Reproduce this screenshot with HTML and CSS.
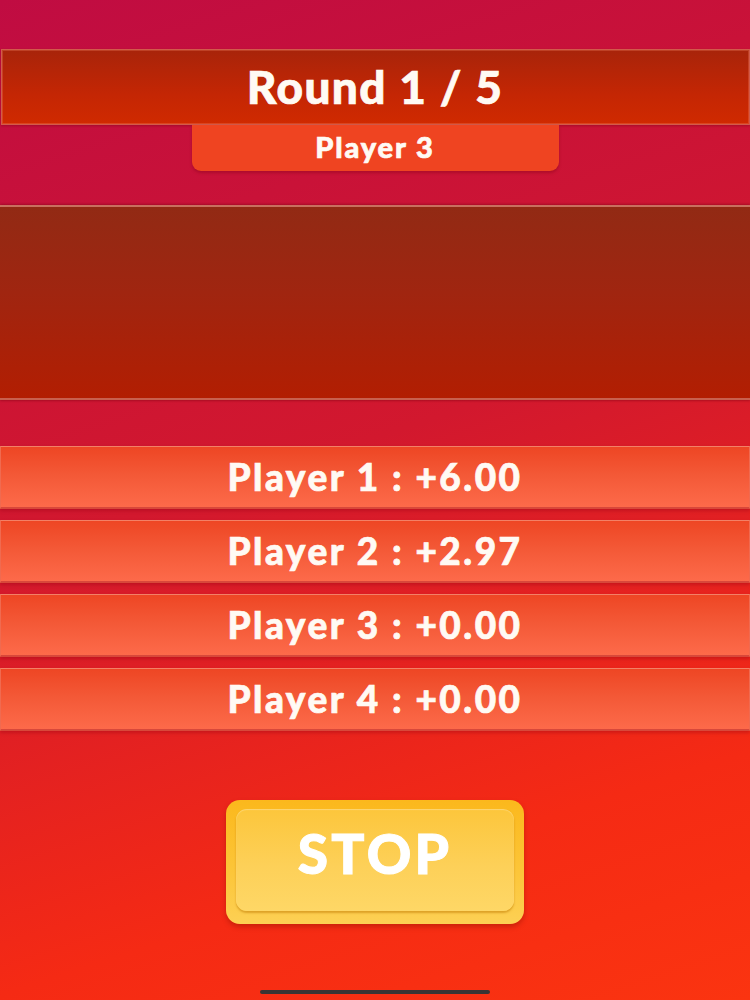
FILE: index.html
```html
<!DOCTYPE html>
<html>
<head>
<meta charset="utf-8">
<link rel="stylesheet" href="styles.css">
</head>
<body>
<div class="screen">
  <div class="title-bar">Round 1 / 5</div>
  <div class="tab">Player 3</div>
  <div class="panel"></div>
  <div class="scores">
    <div class="row">Player 1 : +6.00</div>
    <div class="row">Player 2 : +2.97</div>
    <div class="row">Player 3 : +0.00</div>
    <div class="row">Player 4 : +0.00</div>
  </div>
  <div class="stop"><div class="stop-inner">STOP</div></div>
  <div class="home-indicator"></div>
</div>
</body>
</html>
```

FILE: styles.css
```css
html, body {
  margin: 0;
  padding: 0;
}
.screen {
  width: 750px;
  height: 1000px;
  overflow: hidden;
  display: flex;
  flex-direction: column;
  align-items: center;
  background: linear-gradient(162deg, #c00c42 0%, #d2182e 45%, #f52a14 80%, #fb3410 100%);
  font-family: Lato, "Open Sans", sans-serif;
  font-weight: 900;
  color: #fffaf4;
  -webkit-text-stroke: 0.7px #fffaf4;
}
.title-bar {
  box-sizing: border-box;
  margin-top: 49px;
  width: 749px;
  height: 76px;
  display: flex;
  align-items: center;
  justify-content: center;
  font-size: 46px;
  letter-spacing: 1.4px;
  background: linear-gradient(180deg, #a8240a 0%, #c42604 60%, #d02a00 100%);
  border: 1px solid #d25a4a;
  box-shadow: inset 0 0 0 1px rgba(255, 150, 120, 0.25), 0 1px 2px rgba(120, 0, 20, 0.4);
  padding-bottom: 2px;
}
.tab {
  box-sizing: border-box;
  width: 367px;
  height: 46px;
  background: #ef4421;
  border-radius: 0 0 9px 9px;
  box-shadow: 0 2px 3px rgba(120, 0, 20, 0.35);
  display: flex;
  align-items: center;
  justify-content: center;
  font-size: 29px;
  letter-spacing: 1.9px;
  padding-bottom: 3px;
}
.panel {
  box-sizing: border-box;
  margin-top: 34px;
  width: 750px;
  height: 195px;
  background: linear-gradient(180deg, #922a14 0%, #a02510 45%, #b21e02 100%);
  border-top: 2px solid #c8705e;
  border-bottom: 2px solid #c8604e;
  box-shadow: 0 -1px 2px rgba(120, 0, 20, 0.4), 0 1px 2px rgba(120, 0, 20, 0.4);
}
.scores {
  margin-top: 46px;
  width: 750px;
  display: flex;
  flex-direction: column;
  gap: 11px;
}
.row {
  box-sizing: border-box;
  height: 63px;
  display: flex;
  align-items: center;
  justify-content: center;
  font-size: 37px;
  letter-spacing: 2.5px;
  background: linear-gradient(180deg, #ee4624 0%, #f45a38 50%, #fd6a4a 100%);
  border-top: 1px solid #f38066;
  border-bottom: 2px solid #d8483a;
  border-left: 1px solid #f06a50;
  border-right: 1px solid #f06a50;
  box-shadow: 0 2px 3px rgba(150, 0, 20, 0.35);
  padding-bottom: 2px;
}
.stop {
  box-sizing: border-box;
  margin-top: 69px;
  width: 298px;
  height: 124px;
  padding: 9px 10px 13px 10px;
  border-radius: 14px;
  background: linear-gradient(180deg, #fbb81c 0%, #fcc63a 60%, #fdd054 100%);
  box-shadow: 0 3px 5px rgba(150, 20, 0, 0.45);
  display: flex;
}
.stop-inner {
  flex: 1;
  border-radius: 11px;
  background: linear-gradient(180deg, #fcc63c 0%, #fdd058 55%, #fed766 100%);
  box-shadow: 0 2px 2px rgba(190, 120, 0, 0.5), inset 0 1px 1px rgba(255, 240, 200, 0.4);
  display: flex;
  align-items: center;
  justify-content: center;
  font-size: 55px;
  font-weight: 900;
  letter-spacing: 3.2px;
  color: #ffffff;
  -webkit-text-stroke: 1px #ffffff;
  padding-bottom: 14px;
}
.home-indicator {
  margin-top: 66px;
  width: 230px;
  height: 4px;
  border-radius: 2px;
  background: #3a3434;
}
```
